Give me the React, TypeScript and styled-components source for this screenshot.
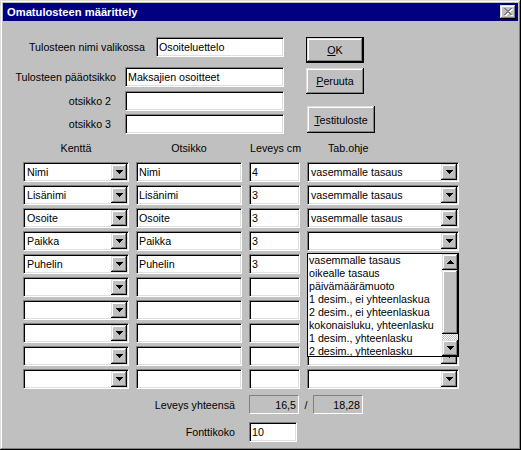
import React from 'react'
import styled, { createGlobalStyle, css } from 'styled-components'

const GlobalStyle = createGlobalStyle`
  html, body {
    margin: 0;
    padding: 0;
    background: #c0c0c0;
  }
  body {
    font-family: "Liberation Sans", Arial, sans-serif;
    font-size: 10.7px;
    color: #000;
  }
  * {
    box-sizing: border-box;
  }
`

const sunken = css`
  border: 1px solid;
  border-color: #808080 #fff #fff #808080;
  box-shadow: inset 1px 1px #000, inset -1px -1px #dfdfdf;
`

const raised = css`
  background: #c0c0c0;
  box-shadow: inset -1px -1px #000, inset 1px 1px #dfdfdf, inset -2px -2px #808080, inset 2px 2px #fff;
`

const Window = styled.div`
  width: 521px;
  height: 450px;
  padding: 3px;
  background: #c0c0c0;
  box-shadow: inset -1px -1px #000, inset 1px 1px #dfdfdf, inset -2px -2px #808080, inset 2px 2px #fff;
  display: flex;
  flex-direction: column;
`

const TitleBar = styled.div`
  height: 18px;
  background: #000080;
  color: #fff;
  font-weight: bold;
  font-size: 11.2px;
  display: flex;
  align-items: center;
  justify-content: space-between;
  padding: 0 2px 0 4px;
`

const CloseButton = styled.div`
  ${raised};
  width: 16px;
  height: 14px;
  display: flex;
  align-items: center;
  justify-content: center;
`

const Body = styled.div`
  padding-top: 16px;
`

const Top = styled.div`
  display: flex;
  align-items: flex-start;
`

const Fields = styled.div`
  width: 281px;
  display: flex;
  flex-direction: column;
  align-items: flex-end;
`

const FieldRow = styled.div<{ $top: number }>`
  display: flex;
  align-items: center;
  margin-top: ${p => p.$top}px;
`

const Label = styled.span<{ $gap: number }>`
  margin-right: ${p => p.$gap}px;
  white-space: nowrap;
`

const TextBox = styled.input<{ $w: number; $h?: number }>`
  ${sunken};
  width: ${p => p.$w}px;
  height: ${p => p.$h ?? 20}px;
  background: #fff;
  font: inherit;
  color: #000;
  padding: 0 2px;
  margin: 0;
  outline: none;
`

const Buttons = styled.div`
  margin-left: 22px;
  display: flex;
  flex-direction: column;
  align-items: flex-start;
`

const Button = styled.div<{ $w: number; $h: number; $top?: number; $left?: number; $default?: boolean }>`
  ${raised};
  width: ${p => p.$w}px;
  height: ${p => p.$h}px;
  margin-top: ${p => p.$top ?? 0}px;
  margin-left: ${p => p.$left ?? 0}px;
  display: flex;
  align-items: center;
  justify-content: center;
  ${p =>
    p.$default &&
    css`
      border: 1px solid #000;
    `}
`

const Table = styled.div`
  margin: 7px 0 0 20px;
`

const columns = css`
  display: grid;
  grid-template-columns: 106px 106px 51px 152px;
  column-gap: 7px;
`

const HeaderRow = styled.div`
  ${columns};
  height: 14px;
  align-items: center;
  margin-bottom: 7px;
`

const HeaderCell = styled.div<{ $align: 'center' | 'left'; $pad?: number }>`
  text-align: ${p => p.$align};
  padding-left: ${p => p.$pad ?? 0}px;
  white-space: nowrap;
`

const Rows = styled.div`
  ${columns};
  grid-auto-rows: 20px;
  row-gap: 3px;
`

const ComboWrap = styled.div`
  position: relative;
`

const ComboField = styled.div`
  ${sunken};
  height: 20px;
  background: #fff;
  display: flex;
  align-items: center;
  padding: 1px;
`

const ComboText = styled.div`
  flex: 1;
  padding-left: 2px;
  white-space: nowrap;
  overflow: hidden;
`

const ArrowButton = styled.div<{ $h?: number }>`
  ${raised};
  width: 16px;
  height: ${p => p.$h ?? 16}px;
  flex-shrink: 0;
  display: flex;
  align-items: center;
  justify-content: center;
`

const DropList = styled.div`
  position: absolute;
  top: 22px;
  left: 0;
  width: 152px;
  height: 104px;
  border: 1px solid #000;
  background: #fff;
  display: flex;
  z-index: 2;
`

const Items = styled.div`
  flex: 1;
  overflow: hidden;
  padding-left: 1px;
`

const Item = styled.div`
  height: 13px;
  line-height: 13px;
  white-space: nowrap;
`

const ScrollBar = styled.div`
  width: 16px;
  display: flex;
  flex-direction: column;
`

const Thumb = styled.div`
  ${raised};
  height: 64px;
`

const Track = styled.div`
  flex: 1;
  background: repeating-conic-gradient(#c0c0c0 0 25%, #fff 0 50%) 0 0 / 2px 2px;
`

const Totals = styled.div`
  margin: 6px 0 0 20px;
  display: flex;
  flex-direction: column;
  gap: 8px;
`

const TotalsRow = styled.div`
  display: flex;
  align-items: center;
`

const TotalsLabel = styled.div`
  width: 212px;
  text-align: right;
  margin-right: 14px;
  white-space: nowrap;
`

const ReadBox = styled.div`
  width: 50px;
  height: 19px;
  border: 1px solid;
  border-color: #808080 #fff #fff #808080;
  display: flex;
  align-items: center;
  justify-content: flex-end;
  padding-right: 2px;
`

const Slash = styled.span`
  width: 14px;
  text-align: center;
`

const Arrow = ({ up }: { up?: boolean }) => (
  <svg width="7" height="4" viewBox="0 0 7 4" shapeRendering="crispEdges">
    <path d={up ? 'M3 0h1v1H3zM2 1h3v1H2zM1 2h5v1H1zM0 3h7v1H0z' : 'M0 0h7v1H0zM1 1h5v1H1zM2 2h3v1H2zM3 3h1v1H3z'} fill="#000" />
  </svg>
)

const crossPath = 'M0 0h2v1H0zM6 0h2v1H6zM1 1h2v1H1zM5 1h2v1H5zM2 2h4v1H2zM3 3h2v1H3zM2 4h4v1H2zM1 5h2v1H1zM5 5h2v1H5zM0 6h2v1H0zM6 6h2v1H6z'

const CloseGlyph = () => (
  <svg width="9" height="8" viewBox="0 0 9 8" shapeRendering="crispEdges">
    <path d={crossPath} fill="#fff" transform="translate(1 1)" />
    <path d={crossPath} fill="#808080" />
  </svg>
)

const Combo = ({ value, children }: { value?: string; children?: React.ReactNode }) => (
  <ComboWrap>
    <ComboField>
      <ComboText>{value}</ComboText>
      <ArrowButton>
        <Arrow />
      </ArrowButton>
    </ComboField>
    {children}
  </ComboWrap>
)

type Row = { field: string; title: string; width: string; tab: string }

const rows: Row[] = [
  { field: 'Nimi', title: 'Nimi', width: '4', tab: 'vasemmalle tasaus' },
  { field: 'Lisänimi', title: 'Lisänimi', width: '3', tab: 'vasemmalle tasaus' },
  { field: 'Osoite', title: 'Osoite', width: '3', tab: 'vasemmalle tasaus' },
  { field: 'Paikka', title: 'Paikka', width: '3', tab: '' },
  { field: 'Puhelin', title: 'Puhelin', width: '3', tab: '' },
  { field: '', title: '', width: '', tab: '' },
  { field: '', title: '', width: '', tab: '' },
  { field: '', title: '', width: '', tab: '' },
  { field: '', title: '', width: '', tab: '' },
  { field: '', title: '', width: '', tab: '' },
]

const tabOptions = [
  'vasemmalle tasaus',
  'oikealle tasaus',
  'päivämäärämuoto',
  '1 desim., ei yhteenlaskua',
  '2 desim., ei yhteenlaskua',
  'kokonaisluku, yhteenlasku',
  '1 desim., yhteenlasku',
  '2 desim., yhteenlasku',
]

const OPEN_ROW = 3

export default function App() {
  return (
    <>
      <GlobalStyle />
      <Window>
        <TitleBar>
          <span>Omatulosteen määrittely</span>
          <CloseButton>
            <CloseGlyph />
          </CloseButton>
        </TitleBar>
        <Body>
          <Top>
            <Fields>
              <FieldRow $top={0}>
                <Label $gap={11}>Tulosteen nimi valikossa</Label>
                <TextBox $w={128} readOnly value="Osoiteluettelo" />
              </FieldRow>
              <FieldRow $top={10}>
                <Label $gap={9}>Tulosteen pääotsikko</Label>
                <TextBox $w={159} readOnly value="Maksajien osoitteet" />
              </FieldRow>
              <FieldRow $top={4}>
                <Label $gap={14}>otsikko 2</Label>
                <TextBox $w={159} readOnly value="" />
              </FieldRow>
              <FieldRow $top={3}>
                <Label $gap={14}>otsikko 3</Label>
                <TextBox $w={159} readOnly value="" />
              </FieldRow>
            </Fields>
            <Buttons>
              <Button $w={58} $h={26} $default>
                <span>
                  <u>O</u>K
                </span>
              </Button>
              <Button $w={58} $h={26} $top={5}>
                <span>
                  <u>P</u>eruuta
                </span>
              </Button>
              <Button $w={68} $h={27} $top={12} $left={1}>
                <span>
                  <u>T</u>estituloste
                </span>
              </Button>
            </Buttons>
          </Top>

          <Table>
            <HeaderRow>
              <HeaderCell $align="center">Kenttä</HeaderCell>
              <HeaderCell $align="center">Otsikko</HeaderCell>
              <HeaderCell $align="left" $pad={1}>Leveys cm</HeaderCell>
              <HeaderCell $align="left" $pad={21}>Tab.ohje</HeaderCell>
            </HeaderRow>
            <Rows>
              {rows.map((r, i) => (
                <React.Fragment key={i}>
                  <Combo value={r.field} />
                  <TextBox $w={106} readOnly value={r.title} />
                  <TextBox $w={51} readOnly value={r.width} />
                  <Combo value={r.tab}>
                    {i === OPEN_ROW && (
                      <DropList>
                        <Items>
                          {tabOptions.map(o => (
                            <Item key={o}>{o}</Item>
                          ))}
                        </Items>
                        <ScrollBar>
                          <ArrowButton>
                            <Arrow up />
                          </ArrowButton>
                          <Thumb />
                          <Track />
                          <ArrowButton>
                            <Arrow />
                          </ArrowButton>
                        </ScrollBar>
                      </DropList>
                    )}
                  </Combo>
                </React.Fragment>
              ))}
            </Rows>
          </Table>

          <Totals>
            <TotalsRow>
              <TotalsLabel>Leveys yhteensä</TotalsLabel>
              <ReadBox>16,5</ReadBox>
              <Slash>/</Slash>
              <ReadBox>18,28</ReadBox>
            </TotalsRow>
            <TotalsRow>
              <TotalsLabel>Fonttikoko</TotalsLabel>
              <TextBox $w={48} readOnly value="10" />
            </TotalsRow>
          </Totals>
        </Body>
      </Window>
    </>
  )
}
